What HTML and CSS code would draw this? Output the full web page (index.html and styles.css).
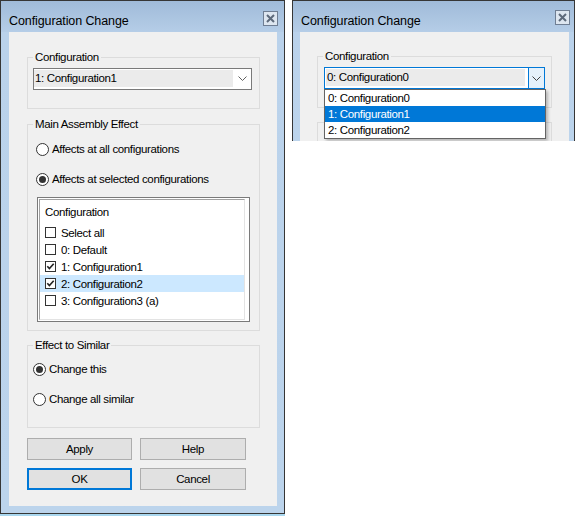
FILE: index.html
```html
<!DOCTYPE html>
<html>
<head>
<meta charset="utf-8">
<title>Configuration Change</title>
<link rel="stylesheet" href="styles.css">
</head>
<body>
<div class="desk">
  <div class="window win-left">
    <div class="titlebar">
      <span class="title">Configuration Change</span>
      <span class="close"><svg width="9" height="9" viewBox="0 0 9 9"><path d="M1 1L8 8M8 1L1 8" stroke="#5d6a7b" stroke-width="2"/></svg></span>
    </div>
    <div class="client">
      <fieldset class="group g1">
        <legend>Configuration</legend>
        <div class="combo">
          <div class="combo-value">1: Configuration1</div>
          <div class="combo-arrow"><svg width="9" height="5" viewBox="0 0 9 5"><path d="M0.5 0.5L4.5 4.5L8.5 0.5" fill="none" stroke="#606060"/></svg></div>
        </div>
      </fieldset>
      <fieldset class="group g2">
        <legend>Main Assembly Effect</legend>
        <div class="radio-row r-first">
          <svg class="radio" width="13" height="13" viewBox="0 0 13 13"><circle cx="6.5" cy="6.5" r="6" fill="#fff" stroke="#333"/></svg>
          <span>Affects at all configurations</span>
        </div>
        <div class="radio-row r-second">
          <svg class="radio" width="13" height="13" viewBox="0 0 13 13"><circle cx="6.5" cy="6.5" r="6" fill="#fff" stroke="#333"/><circle cx="6.5" cy="6.5" r="3.5" fill="#333"/></svg>
          <span>Affects at selected configurations</span>
        </div>
        <div class="listbox">
          <div class="list-inner">
            <div class="list-head">Configuration</div>
            <div class="list-row">
              <svg class="check" width="11" height="11" viewBox="0 0 11 11"><rect x="0.5" y="0.5" width="10" height="10" fill="#fff" stroke="#333"/></svg>
              <span>Select all</span>
            </div>
            <div class="list-row">
              <svg class="check" width="11" height="11" viewBox="0 0 11 11"><rect x="0.5" y="0.5" width="10" height="10" fill="#fff" stroke="#333"/></svg>
              <span>0: Default</span>
            </div>
            <div class="list-row">
              <svg class="check" width="11" height="11" viewBox="0 0 11 11"><rect x="0.5" y="0.5" width="10" height="10" fill="#fff" stroke="#333"/><path d="M2.3 5.3L4.4 7.6L8.7 2.8" fill="none" stroke="#222" stroke-width="1.6"/></svg>
              <span>1: Configuration1</span>
            </div>
            <div class="list-row selected">
              <svg class="check" width="11" height="11" viewBox="0 0 11 11"><rect x="0.5" y="0.5" width="10" height="10" fill="#fff" stroke="#333"/><path d="M2.3 5.3L4.4 7.6L8.7 2.8" fill="none" stroke="#222" stroke-width="1.6"/></svg>
              <span>2: Configuration2</span>
            </div>
            <div class="list-row">
              <svg class="check" width="11" height="11" viewBox="0 0 11 11"><rect x="0.5" y="0.5" width="10" height="10" fill="#fff" stroke="#333"/></svg>
              <span>3: Configuration3 (a)</span>
            </div>
          </div>
        </div>
      </fieldset>
      <fieldset class="group g3">
        <legend>Effect to Similar</legend>
        <div class="radio-row r-first">
          <svg class="radio" width="13" height="13" viewBox="0 0 13 13"><circle cx="6.5" cy="6.5" r="6" fill="#fff" stroke="#333"/><circle cx="6.5" cy="6.5" r="3.5" fill="#333"/></svg>
          <span>Change this</span>
        </div>
        <div class="radio-row r-second">
          <svg class="radio" width="13" height="13" viewBox="0 0 13 13"><circle cx="6.5" cy="6.5" r="6" fill="#fff" stroke="#333"/></svg>
          <span>Change all similar</span>
        </div>
      </fieldset>
      <div class="buttons">
        <div class="btn">Apply</div>
        <div class="btn">Help</div>
        <div class="btn default">OK</div>
        <div class="btn">Cancel</div>
      </div>
    </div>
  </div>

  <div class="window win-right">
    <div class="titlebar">
      <span class="title">Configuration Change</span>
      <span class="close"><svg width="9" height="9" viewBox="0 0 9 9"><path d="M1 1L8 8M8 1L1 8" stroke="#5d6a7b" stroke-width="2"/></svg></span>
    </div>
    <div class="client">
      <fieldset class="group g1">
        <legend>Configuration</legend>
        <div class="combo open">
          <div class="combo-value">0: Configuration0</div>
          <div class="combo-arrow"><svg width="9" height="5" viewBox="0 0 9 5"><path d="M0.5 0.5L4.5 4.5L8.5 0.5" fill="none" stroke="#404040"/></svg></div>
        </div>
      </fieldset>
      <div class="group-behind"></div>
    </div>
    <div class="dropdown">
      <div class="dd-item">0: Configuration0</div>
      <div class="dd-item active">1: Configuration1</div>
      <div class="dd-item">2: Configuration2</div>
    </div>
  </div>
</div>
</body>
</html>
```

FILE: styles.css
```css
* {
  box-sizing: border-box;
}

body {
  margin: 0;
  background: #ffffff;
  font-family: "Liberation Sans", Arial, sans-serif;
  font-size: 11.5px;
  letter-spacing: -0.35px;
  color: #000;
}

.desk {
  display: flex;
  align-items: flex-start;
  gap: 7px;
  width: 580px;
  height: 516px;
}

.window {
  border: 1px solid #363636;
  background: linear-gradient(to bottom, #a0bbd9 0, #b5cde7 31px, #bad2eb 31px, #bcd4ec 100%);
  display: flex;
  flex-direction: column;
  flex: none;
}

.win-left {
  width: 285px;
  height: 514px;
  box-shadow: 0 2px 0 #a9d7ef;
}

.win-right {
  width: 283px;
  height: 141px;
  border-bottom: none;
  overflow: hidden;
  position: relative;
}

.titlebar {
  height: 31px;
  flex: none;
  display: flex;
  align-items: flex-start;
}

.title {
  font-size: 12.5px;
  letter-spacing: -0.1px;
  line-height: 15px;
  margin: 13px 0 0 8px;
}

.close {
  margin-left: auto;
  margin-top: 10px;
  margin-right: 6px;
  width: 15px;
  height: 15px;
  border: 1px solid #6f7e93;
  background: #dde6f0;
  display: flex;
  align-items: center;
  justify-content: center;
}

.win-right .close {
  margin-top: 9px;
  margin-right: 4px;
}

.client {
  background: #f0f0f0;
  flex: none;
}

.win-left .client {
  margin: 0 7px 0 8px;
  height: 474px;
  padding: 19px 0 0 18px;
}

.win-right .client {
  margin: 0 5px 0 7px;
  height: 200px;
  padding: 18px 0 0 17px;
}

fieldset.group {
  margin: 0;
  border: 1px solid #dcdcdc;
  padding: 0 0 0 5px;
  min-width: 0;
  width: 233px;
}

.win-right fieldset.group {
  width: 235px;
}

.group-behind {
  margin-top: 14px;
  width: 235px;
  height: 60px;
  border: 1px solid #dcdcdc;
}

legend {
  padding: 0 2px;
  line-height: 13px;
}

.g1 {
  padding-top: 4px !important;
  padding-bottom: 18px !important;
}

.g2 {
  margin-top: 9px !important;
  padding-bottom: 8px !important;
}

.g3 {
  margin-top: 8px !important;
  padding-bottom: 18px !important;
}

/* combobox */
.combo {
  width: 219px;
  height: 22px;
  border: 1px solid #7a7a7a;
  background: #fff;
  display: flex;
  padding: 1px 0 2px 0;
}

.win-right .combo {
  width: 221px;
  margin-left: 1px;
}

.combo-value {
  flex: 1;
  background: #ebebeb;
  line-height: 17px;
  padding-left: 1px;
}

.combo-arrow {
  width: 18px;
  display: flex;
  align-items: center;
  justify-content: center;
}

.combo.open {
  border-color: #0078d7;
  padding: 0;
}

.combo.open .combo-value {
  margin: 1px 3px 2px 1px;
  line-height: 17px;
}

.combo.open .combo-arrow {
  width: 16px;
  border-left: 1px solid #0078d7;
  background: #e5f1fb;
}

/* radios */
.radio-row {
  display: flex;
  align-items: center;
  gap: 3px;
  height: 20px;
}

.g2 .radio-row {
  margin-left: 3px;
}

.g2 .r-first {
  margin-top: 8px;
}

.g3 .r-first {
  margin-top: 7px;
}

.r-second {
  margin-top: 10px;
}

.radio {
  flex: none;
  display: block;
}

/* listbox */
.listbox {
  margin: 8px 0 0 4px;
  width: 213px;
  height: 125px;
  border: 1px solid #7a7a7a;
  padding: 1px;
  background: #fff;
}

.list-inner {
  height: 100%;
  margin-right: 3px;
  border: 1px solid;
  border-color: #a0a0a0 #e3e3e3 #e3e3e3 #a0a0a0;
  padding-top: 5px;
}

.list-head {
  line-height: 14px;
  padding-left: 5px;
  margin-bottom: 5px;
}

.list-row {
  display: flex;
  align-items: center;
  gap: 5px;
  height: 17px;
  padding-left: 5px;
}

.list-row.selected {
  background: #cce8ff;
}

.check {
  flex: none;
  display: block;
}

/* buttons */
.buttons {
  margin-top: 10px;
  display: grid;
  grid-template-columns: 105px 106px;
  grid-auto-rows: 22px;
  column-gap: 8px;
  row-gap: 8px;
}

.btn {
  border: 1px solid #adadad;
  background: #e1e1e1;
  display: flex;
  align-items: center;
  justify-content: center;
}

.btn.default {
  border: 2px solid #0078d7;
}

/* dropdown list */
.dropdown {
  position: absolute;
  left: 31px;
  top: 88px;
  width: 222px;
  height: 50px;
  border: 1px solid #646464;
  background: #fff;
  box-shadow: 2px 2px 3px rgba(0, 0, 0, 0.25);
}

.dd-item {
  height: 16px;
  line-height: 16px;
  padding-left: 3px;
}

.dd-item.active {
  background: #0078d7;
  color: #fff;
}
```
